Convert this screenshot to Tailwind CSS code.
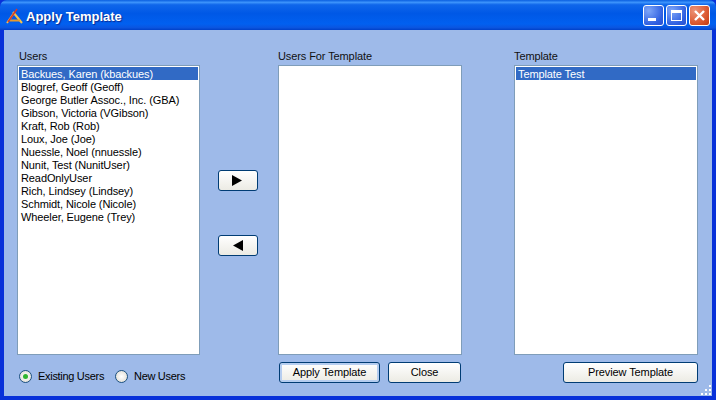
<!DOCTYPE html>
<html lang="en">
<head>
    <meta charset="UTF-8">
    <title>Apply Template</title>
    <script src="https://cdn.jsdelivr.net/npm/@tailwindcss/browser@4"></script>
</head>
<body class="w-[716px] h-[400px] overflow-hidden bg-[#0831d9] font-['Liberation_Sans',Arial,sans-serif] text-[11px] tracking-[-0.1px] text-black">
    <!-- title bar -->
    <div class="h-[30px] flex items-center rounded-t-[7px] bg-[linear-gradient(180deg,#0a5fe0_0%,#3c93fb_8%,#0f66ea_16%,#0058e6_45%,#0160f0_80%,#0a55e0_92%,#0040c8_100%)] pl-[6px] pr-[6px] pt-[1px]">
        <svg class="w-[17px] h-[17px] shrink-0 mt-[1px]" viewBox="0 0 17 17">
            <path d="M1 15 L8 5 M7 4 L16 15" fill="none" stroke="#f6c24a" stroke-width="2"/>
            <path d="M4 12.5 H14" stroke="#e89a2c" stroke-width="2"/>
            <path d="M2 14 L11 1" stroke="#d8382a" stroke-width="1.5"/>
        </svg>
        <span class="ml-[3px] mt-[2px] font-bold text-[13px] tracking-normal text-white [text-shadow:1px_1px_1px_#0a2a90]">Apply Template</span>
        <div class="ml-auto flex gap-[2px]">
            <div class="w-[21px] h-[21px] rounded-[3px] border border-white bg-[radial-gradient(circle_at_25%_25%,#7ea6f8,#2f5fe0_70%,#2a50d0)] flex items-end pl-[4px] pb-[4px]">
                <div class="w-[8px] h-[3px] bg-white"></div>
            </div>
            <div class="w-[21px] h-[21px] rounded-[3px] border border-white bg-[radial-gradient(circle_at_25%_25%,#7ea6f8,#2f5fe0_70%,#2a50d0)] p-[4px]">
                <div class="w-full h-full border border-white border-t-[3px]"></div>
            </div>
            <div class="w-[21px] h-[21px] rounded-[3px] border border-white bg-[radial-gradient(circle_at_25%_25%,#ec9478,#dc5a32_60%,#c23a10)]">
                <svg viewBox="0 0 19 19" class="w-[19px] h-[19px]"><path d="M5 5 L14 14 M14 5 L5 14" stroke="#fff" stroke-width="2.4"/></svg>
            </div>
        </div>
    </div>

    <!-- client area -->
    <div class="relative h-[366px] mx-[4px] bg-[#9ebae9] flex pl-[13px] pt-[19px]">
        <!-- users -->
        <div class="w-[183px] shrink-0">
            <div class="h-[16px] leading-[14px] pl-[2px] text-[#111]">Users</div>
            <div class="h-[290px] bg-white border border-[#7f9db9] pt-[1px] px-[1px] leading-[13px]">
                <div class="h-[13px] bg-[#316ac5] text-white pl-[2px] pt-[1px]">Backues, Karen (kbackues)</div>
                <div class="pl-[2px] pt-[1px] h-[13px]">Blogref, Geoff (Geoff)</div>
                <div class="pl-[2px] pt-[1px] h-[13px]">George Butler Assoc., Inc. (GBA)</div>
                <div class="pl-[2px] pt-[1px] h-[13px]">Gibson, Victoria (VGibson)</div>
                <div class="pl-[2px] pt-[1px] h-[13px]">Kraft, Rob (Rob)</div>
                <div class="pl-[2px] pt-[1px] h-[13px]">Loux, Joe (Joe)</div>
                <div class="pl-[2px] pt-[1px] h-[13px]">Nuessle, Noel (nnuessle)</div>
                <div class="pl-[2px] pt-[1px] h-[13px]">Nunit, Test (NunitUser)</div>
                <div class="pl-[2px] pt-[1px] h-[13px]">ReadOnlyUser</div>
                <div class="pl-[2px] pt-[1px] h-[13px]">Rich, Lindsey (Lindsey)</div>
                <div class="pl-[2px] pt-[1px] h-[13px]">Schmidt, Nicole (Nicole)</div>
                <div class="pl-[2px] pt-[1px] h-[13px]">Wheeler, Eugene (Trey)</div>
            </div>
            <div class="mt-[14px] flex items-center pl-[2px] h-[14px] whitespace-nowrap tracking-[-0.3px]">
                <span class="w-[13px] h-[13px] shrink-0 rounded-full border border-[#1c5180] bg-[radial-gradient(circle,#fff,#dcd8ce)] flex items-center justify-center">
                    <span class="w-[5px] h-[5px] rounded-full bg-[#2fb52f]"></span>
                </span>
                <span class="ml-[6px] w-[66px]">Existing Users</span>
                <span class="ml-[11px] w-[13px] h-[13px] shrink-0 rounded-full border border-[#1c5180] bg-[radial-gradient(circle,#fff,#dcd8ce)]"></span>
                <span class="ml-[6px]">New Users</span>
            </div>
        </div>

        <!-- move buttons -->
        <div class="w-[40px] ml-[18px] shrink-0 pt-[121px] flex flex-col gap-[44px]">
            <button class="h-[21px] rounded-[3px] border border-[#003c74] bg-gradient-to-b from-white to-[#ecebe4] flex items-center justify-center pr-[2px]">
                <svg class="w-[10px] h-[11px]" viewBox="0 0 10 11"><path d="M0 0 L10 5.5 L0 11 Z" fill="#000"/></svg>
            </button>
            <button class="h-[21px] rounded-[3px] border border-[#003c74] bg-gradient-to-b from-white to-[#ecebe4] flex items-center justify-center">
                <svg class="w-[10px] h-[11px]" viewBox="0 0 10 11"><path d="M10 0 L0 5.5 L10 11 Z" fill="#000"/></svg>
            </button>
        </div>

        <!-- users for template -->
        <div class="w-[184px] ml-[20px] shrink-0">
            <div class="h-[16px] leading-[14px] text-[#111]">Users For Template</div>
            <div class="h-[290px] bg-white border border-[#7f9db9]"></div>
            <div class="mt-[7px] flex pl-[1px]">
                <button class="w-[101px] h-[21px] rounded-[3px] border border-[#003c74] bg-gradient-to-b from-white to-[#ecebe4] shadow-[inset_0_0_0_2px_#b5cdf0]">Apply Template</button>
                <button class="w-[73px] ml-[8px] h-[21px] rounded-[3px] border border-[#003c74] bg-gradient-to-b from-white to-[#ecebe4]">Close</button>
            </div>
        </div>

        <!-- template -->
        <div class="w-[184px] ml-[52px] shrink-0">
            <div class="h-[16px] leading-[14px] text-[#111]">Template</div>
            <div class="h-[290px] bg-white border border-[#7f9db9] pt-[1px] px-[1px] leading-[13px]">
                <div class="h-[13px] bg-[#316ac5] text-white pl-[2px] pt-[1px]">Template Test</div>
            </div>
            <div class="mt-[7px] flex justify-end">
                <button class="w-[135px] h-[21px] rounded-[3px] border border-[#003c74] bg-gradient-to-b from-white to-[#ecebe4]">Preview Template</button>
            </div>
        </div>

        <!-- resize grip -->
        <svg class="absolute right-[1px] bottom-[1px] w-[10px] h-[10px]" viewBox="0 0 10 10" fill="#fff">
            <rect x="8" y="0" width="2" height="2"/><rect x="4" y="4" width="2" height="2"/><rect x="8" y="4" width="2" height="2"/>
            <rect x="0" y="8" width="2" height="2"/><rect x="4" y="8" width="2" height="2"/><rect x="8" y="8" width="2" height="2"/>
        </svg>
    </div>
</body>
</html>
